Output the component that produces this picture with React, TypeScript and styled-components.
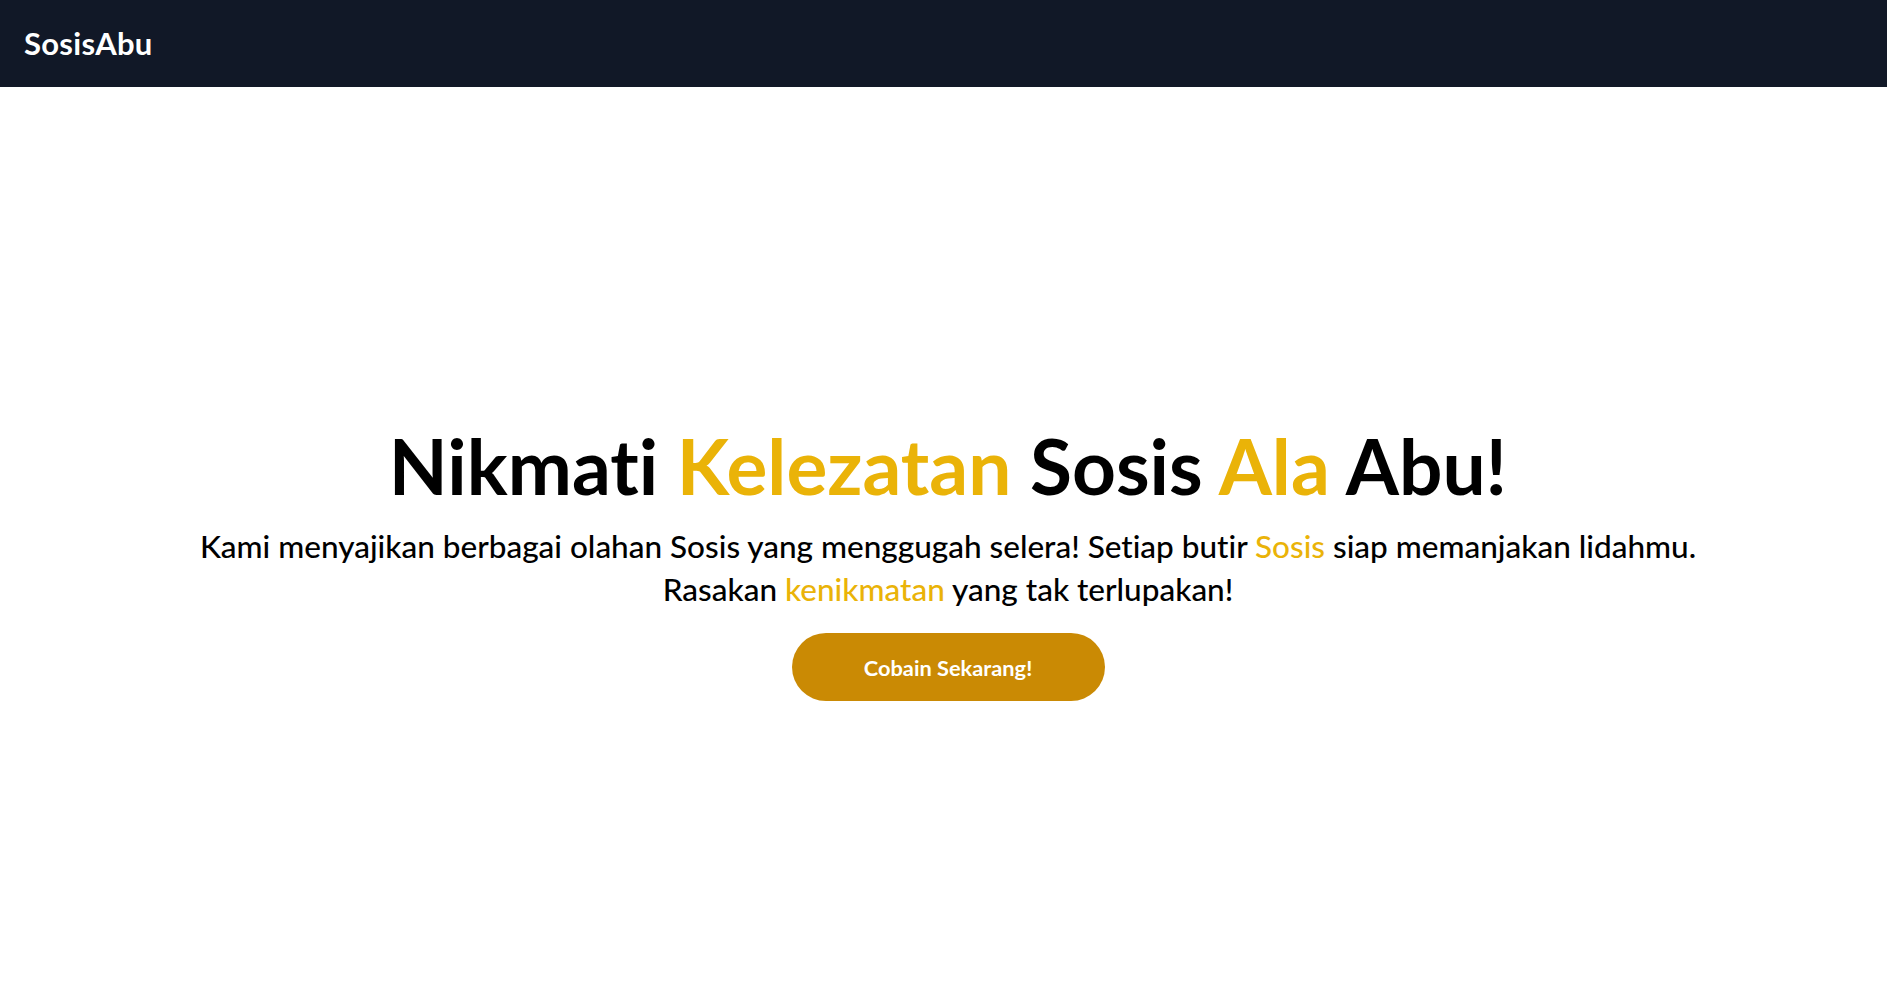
import React from "react";
import styled, { createGlobalStyle } from "styled-components";

const GlobalStyle = createGlobalStyle`
  * { box-sizing: border-box; }
  body {
    margin: 0;
    background: #ffffff;
    font-family: Lato, "Open Sans", sans-serif;
    font-variant-ligatures: none;
    color: #000000;
  }
`;

const Page = styled.div`
  min-height: 100vh;
  display: flex;
  flex-direction: column;
`;

const NavBar = styled.nav`
  height: 87px;
  background: #111827;
  display: flex;
  align-items: center;
  padding: 0 24px 2px;
`;

const Logo = styled.a`
  color: #ffffff;
  font-size: 31px;
  font-weight: 700;
  text-decoration: none;
  letter-spacing: 0.3px;
`;

const Hero = styled.main`
  display: flex;
  flex-direction: column;
  align-items: center;
  padding: 341px 0 0 9px;
  text-align: center;
`;

const Title = styled.h1`
  margin: 0;
  font-size: 76.6px;
  line-height: 75px;
  font-weight: 700;
  white-space: nowrap;
`;

const Lead = styled.p`
  margin: 22px 0 0;
  font-size: 31.5px;
  line-height: 43px;
  font-weight: 500;
`;

const Accent = styled.span`
  color: #eab308;
`;

const CtaButton = styled.button`
  margin-top: 22px;
  width: 313px;
  height: 68px;
  border: none;
  border-radius: 9999px;
  background: #ca8a04;
  color: #ffffff;
  font-family: Lato, "Open Sans", sans-serif;
  font-size: 21.8px;
  font-weight: 700;
  cursor: pointer;
`;

export default function App() {
  return (
    <Page>
      <GlobalStyle />
      <NavBar>
        <Logo href="#">SosisAbu</Logo>
      </NavBar>
      <Hero>
        <Title>
          Nikmati <Accent>Kelezatan</Accent> Sosis <Accent>Ala</Accent> Abu!
        </Title>
        <Lead>
          Kami menyajikan berbagai olahan Sosis yang menggugah selera! Setiap butir{" "}
          <Accent>Sosis</Accent> siap memanjakan lidahmu.
          <br />
          Rasakan <Accent>kenikmatan</Accent> yang tak terlupakan!
        </Lead>
        <CtaButton>Cobain Sekarang!</CtaButton>
      </Hero>
    </Page>
  );
}
